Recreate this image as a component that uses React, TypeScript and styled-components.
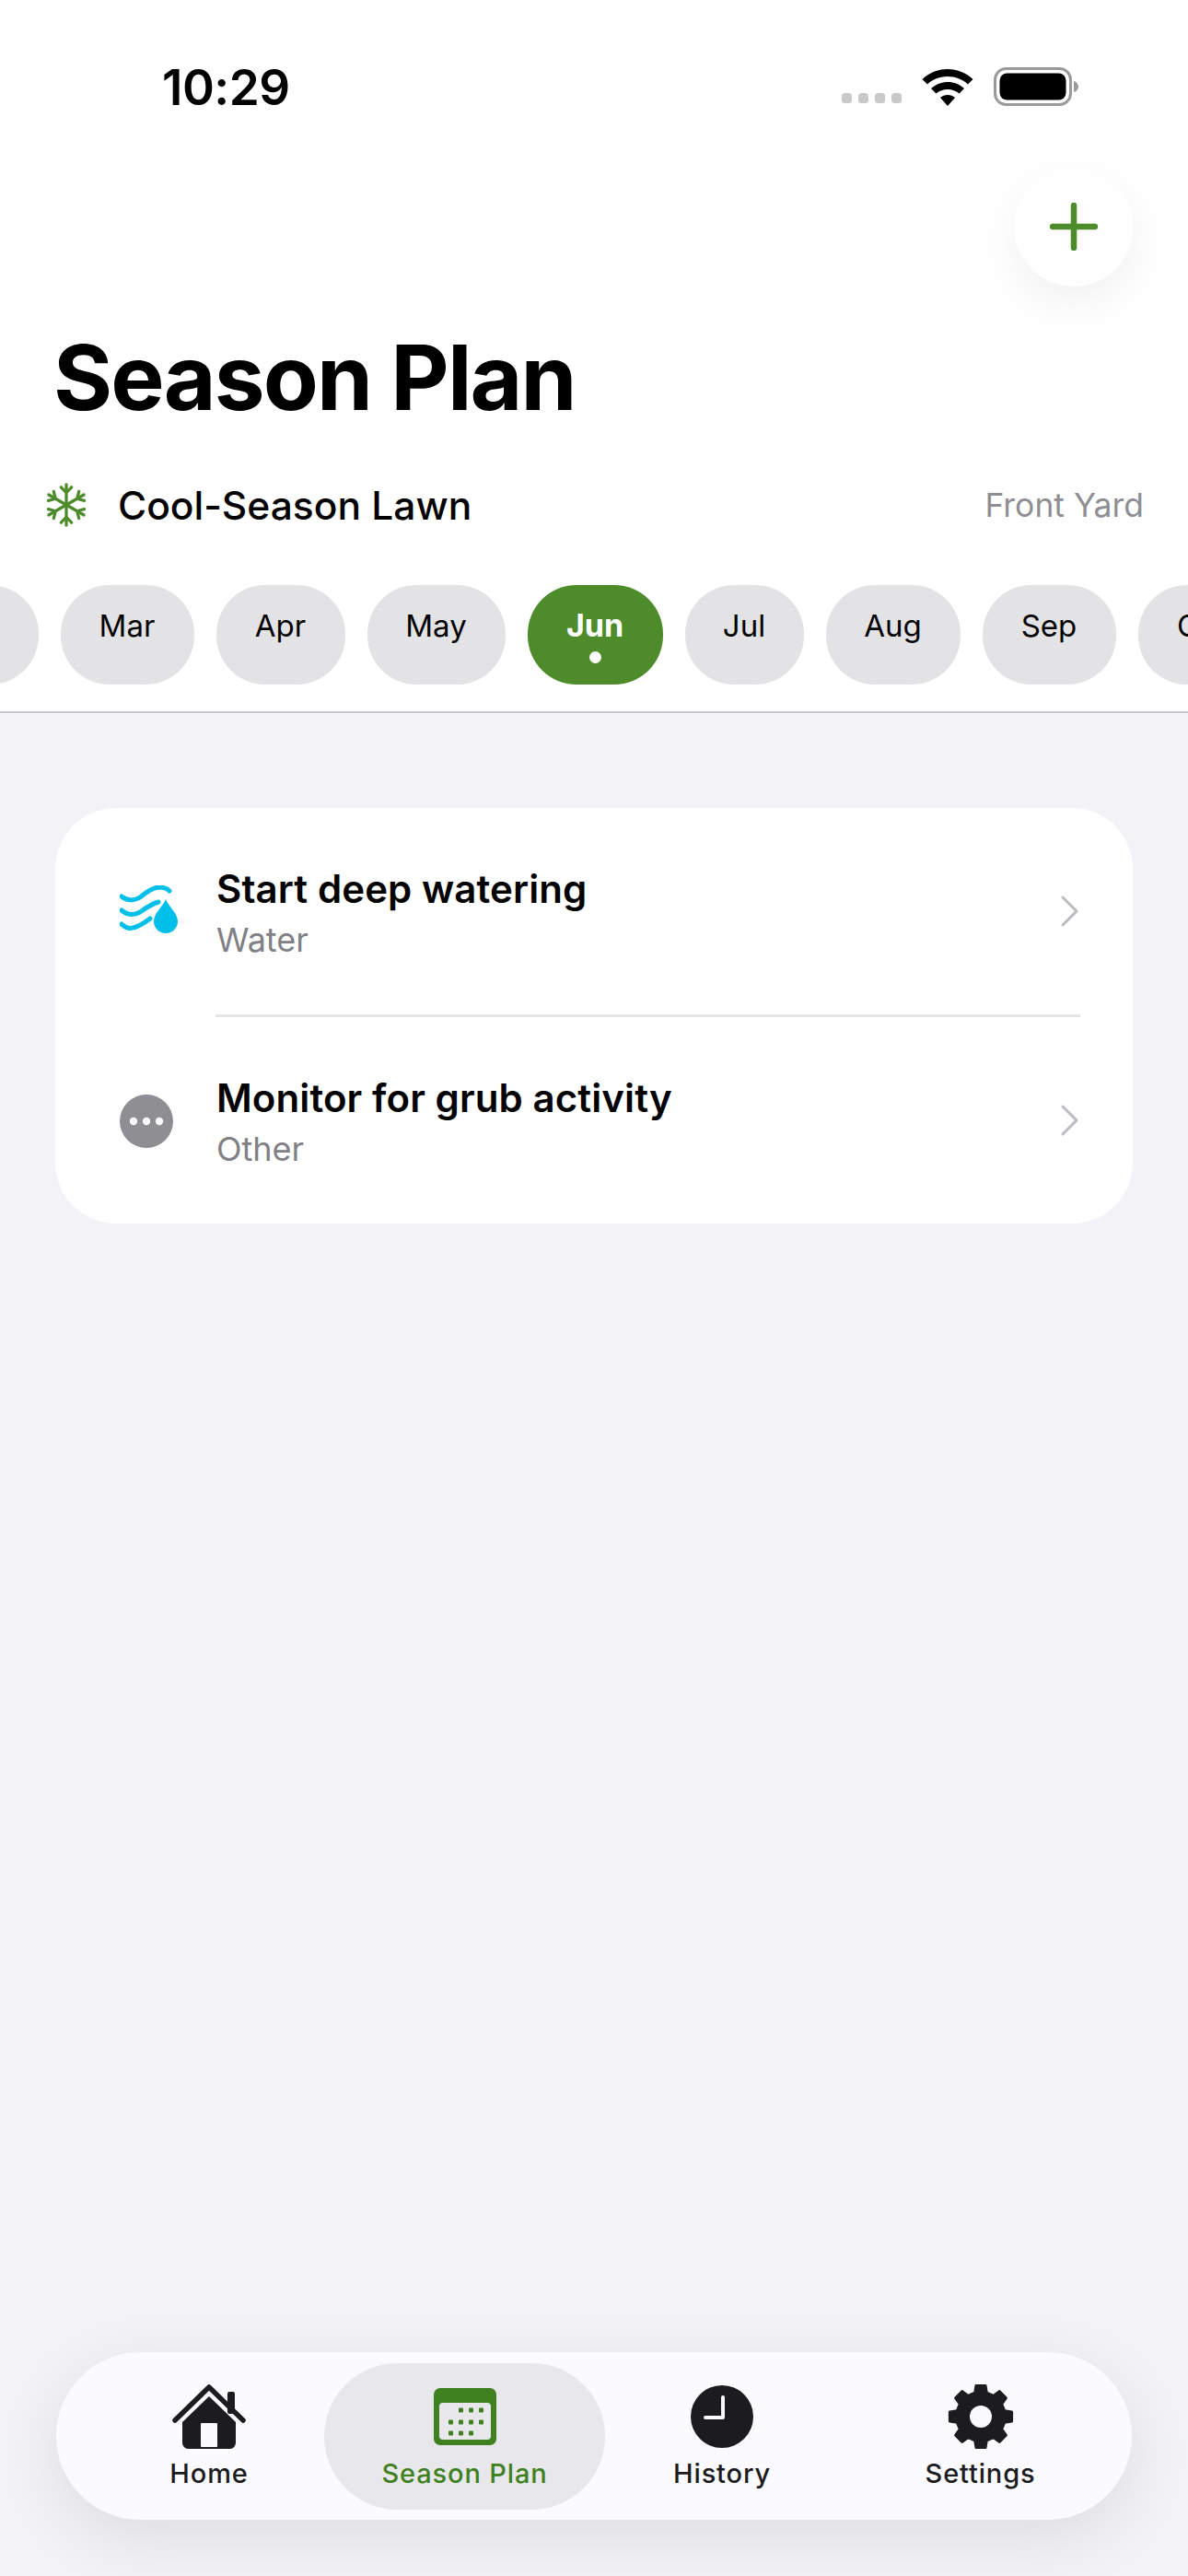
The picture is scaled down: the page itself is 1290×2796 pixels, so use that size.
import React from 'react';
import styled, { createGlobalStyle } from 'styled-components';

const Global = createGlobalStyle`
  html, body { margin: 0; padding: 0; background: #f2f2f7; }
  body { font-family: Inter, "Noto Sans", sans-serif; color: #000; }
  * { box-sizing: border-box; }
`;

const Page = styled.div`
  width: 1290px;
  height: 2796px;
  display: flex;
  flex-direction: column;
  overflow: hidden;
  background: #f2f2f7;
`;

const Header = styled.header`
  background: #fff;
  height: 774px;
  border-bottom: 2px solid #c9c9cc;
  display: flex;
  flex-direction: column;
`;

const StatusBar = styled.div`
  height: 181px;
  padding: 65px 119px 0 176px;
  display: flex;
  justify-content: space-between;
  align-items: flex-start;
`;

const Time = styled.div`
  font-size: 53px;
  line-height: 60px;
  font-weight: 600;
  letter-spacing: -0.5px;
`;

const StatusIcons = styled.div`
  display: flex;
  align-items: flex-end;
  gap: 22px;
  padding-top: 8px;
`;

const SignalDots = styled.div`
  display: flex;
  gap: 7px;
  padding-bottom: 3px;
`;

const SignalDot = styled.span`
  width: 11px;
  height: 11px;
  border-radius: 3.5px;
  background: #c9c9c9;
`;

const AddRow = styled.div`
  display: flex;
  justify-content: flex-end;
  padding-right: 59px;
  height: 130px;
`;

const AddButton = styled.button`
  width: 130px;
  height: 130px;
  border-radius: 50%;
  border: 0;
  padding: 0;
  background: #fefefe;
  box-shadow: 0 18px 50px rgba(0, 0, 0, 0.06);
  display: flex;
  align-items: center;
  justify-content: center;
`;

const Title = styled.h1`
  margin: 41px 0 0;
  padding-left: 58px;
  font-size: 98px;
  line-height: 116px;
  font-weight: 700;
  letter-spacing: -1.9px;
`;

const LawnRow = styled.div`
  margin-top: 50px;
  height: 60px;
  padding: 0 48px 0 49px;
  display: flex;
  align-items: center;
`;

const LawnName = styled.div`
  font-size: 42.5px;
  font-weight: 500;
  margin-left: 33px;
  flex: 1;
`;

const YardName = styled.div`
  font-size: 35.5px;
  color: #8e8e93;
`;

const MonthStrip = styled.div`
  margin-top: 57px;
  margin-left: -102px;
  display: flex;
  gap: 24px;
  width: 1500px;
`;

const Month = styled.div<{ $width: number; $active?: boolean }>`
  width: ${p => p.$width}px;
  height: 108px;
  flex: none;
  border-radius: 53px;
  background: ${p => (p.$active ? '#4e8c2b' : '#e3e3e6')};
  color: ${p => (p.$active ? '#fff' : '#000')};
  font-size: ${p => (p.$active ? 34 : 33)}px;
  font-weight: ${p => (p.$active ? 700 : 400)};
  display: flex;
  flex-direction: column;
  align-items: center;
  padding: 24px 1px 0 0;
  line-height: 40px;
`;

const MonthDot = styled.span`
  width: 13px;
  height: 13px;
  border-radius: 50%;
  background: #fff;
  margin-top: 8px;
`;

const Main = styled.main`
  flex: 1;
  padding: 103px 60px 0;
`;

const Card = styled.section`
  height: 451px;
  background: #fff;
  border-radius: 66px;
  display: flex;
  flex-direction: column;
`;

const Row = styled.div`
  height: 225px;
  display: flex;
  align-items: flex-start;
  padding: 0 57px 0 70px;
`;

const IconSlot = styled.div`
  width: 105px;
  flex: none;
  height: 100%;
  padding-top: 84px;
`;

const RowText = styled.div`
  flex: 1;
  padding-top: 62px;
  display: flex;
  flex-direction: column;
`;

const RowTitle = styled.div`
  font-size: 42px;
  line-height: 52px;
  font-weight: 600;
  letter-spacing: 0.1px;
`;

const RowSub = styled.div`
  margin-top: 7px;
  font-size: 36px;
  line-height: 44px;
  color: #808085;
`;

const ChevronSlot = styled.div`
  padding-top: 94px;
  flex: none;
`;

const Separator = styled.div`
  height: 3px;
  margin: 0 57px 0 174px;
  background: #e5e5e8;
`;

const BottomNav = styled.nav`
  margin: 0 61px 61px 61px;
  height: 182px;
  border-radius: 91px;
  background: #fafaff;
  box-shadow: 0 20px 70px rgba(0, 0, 0, 0.09);
  padding: 12px 11px 11px 41px;
  display: grid;
  grid-template-columns: 250px 305px 254px 1fr;
`;

const Tab = styled.div<{ $active?: boolean }>`
  display: flex;
  flex-direction: column;
  align-items: center;
  border-radius: 80px;
  padding-top: 23px;
  color: ${p => (p.$active ? '#3f8020' : '#1c1c1e')};
  background: ${p => (p.$active ? '#e8e8ec' : 'transparent')};
`;

const TabIcon = styled.div`
  height: 70px;
  display: flex;
  align-items: center;
  justify-content: center;
`;

const TabLabel = styled.div`
  margin-top: 9px;
  font-size: 29px;
  line-height: 36px;
  font-weight: 500;
  letter-spacing: 0.85px;
`;

const gearPath = () => {
  const cx = 36, cy = 36, ro = 34, ri = 26.5, teeth = 8;
  const pts: string[] = [];
  for (let i = 0; i < teeth; i++) {
    const a = (i * 2 * Math.PI) / teeth - Math.PI / 2;
    const w1 = 0.24, w2 = 0.15;
    const p = (r: number, t: number) =>
      `${(cx + r * Math.cos(t)).toFixed(2)} ${(cy + r * Math.sin(t)).toFixed(2)}`;
    pts.push(`${i === 0 ? 'M' : 'L'}${p(ri, a - w1)}`, `L${p(ro, a - w2)}`, `L${p(ro, a + w2)}`, `L${p(ri, a + w1)}`);
  }
  return pts.join(' ') + 'Z';
};

const Chevron = () => (
  <svg width="22" height="36" viewBox="0 0 22 36" fill="none">
    <path d="M3 3l15 15L3 33" stroke="#bcbcc0" strokeWidth="3" strokeLinecap="round" strokeLinejoin="round" />
  </svg>
);

const WaterIcon = () => (
  <svg width="66" height="60" viewBox="0 0 66 60" fill="none">
    <g stroke="#00bfe8" strokeWidth="5" strokeLinecap="round">
      <path d="M2 12c6 5 14 5 20 1 6-5 14-11 21-11 4 0 8 1 11 4" />
      <path d="M2 27c6 5 13 6 20 2 7-5 13-9 20-11" />
      <path d="M2 42c5 5 11 6 18 2 5-2 9-5 13-8" />
    </g>
    <path d="M50 15c3 8 13 15 13 24a13 13 0 0 1-26 0c0-9 10-16 13-24z" fill="#00bfe8" />
  </svg>
);

const MoreIcon = () => (
  <svg width="58" height="58" viewBox="0 0 58 58">
    <circle cx="29" cy="29" r="29" fill="#8e8e93" />
    <circle cx="15" cy="29" r="4.200" fill="#fff" />
    <circle cx="29" cy="29" r="4.200" fill="#fff" />
    <circle cx="43" cy="29" r="4.200" fill="#fff" />
  </svg>
);

const Snowflake = () => (
  <svg width="46" height="48" viewBox="0 0 48 50" fill="none" stroke="#4e8c2b" strokeWidth="3.400" strokeLinecap="round" strokeLinejoin="round">
    {[0, 60, 120].map(r => (
      <g key={r} transform={`rotate(${r} 24 25)`}>
        <path d="M24 2v46" />
        <path d="M18 5l6 6 6-6" />
        <path d="M18 45l6-6 6 6" />
      </g>
    ))}
  </svg>
);

const Wifi = () => (
  <svg width="56" height="40" viewBox="0 0 56 40">
    <path d="M28 0c10.500 0 20 4 27.500 11l-5.500 5.500C44 11 36.500 8 28 8S12 11 6 16.500L.5 11C8 4 17.500 0 28 0z" />
    <path d="M28 14c6.800 0 13 2.600 18 7l-5.500 5.500C37 23.500 32.700 22 28 22s-9 1.500-12.500 4.500L10 21c5-4.400 11.200-7 18-7z" />
    <path d="M28 28c3 0 5.800 1.100 8 3L28 40l-8-9c2.200-1.900 5-3 8-3z" />
  </svg>
);

const Battery = () => (
  <svg width="92" height="42" viewBox="0 0 92 42">
    <rect x="1.500" y="1.500" width="82" height="39" rx="12" fill="none" stroke="#9a9a9a" strokeWidth="3" />
    <rect x="6.500" y="6.500" width="72" height="29" rx="8" fill="#000" />
    <path d="M87 15c3 .8 5 3 5 6s-2 5.200-5 6z" fill="#9a9a9a" />
  </svg>
);

const Plus = () => (
  <svg width="52" height="52" viewBox="0 0 52 52">
    <path d="M26 3v46M3 26h46" stroke="#4e8c2b" strokeWidth="6.500" strokeLinecap="round" />
  </svg>
);

const HomeIcon = () => (
  <svg width="82" height="70" viewBox="0 0 82 70" fill="#1c1c1e">
    <rect x="61" y="8" width="8" height="24" rx="2" />
    <path d="M4 39L41 3l37 36" fill="none" stroke="#1c1c1e" strokeWidth="5.500" strokeLinecap="round" strokeLinejoin="round" />
    <path d="M41 13l29 28v22c0 4-3 7-6 7H18c-3 0-6-3-6-7V41z" />
    <rect x="32" y="42" width="18" height="26" rx="1" fill="#fafaff" />
  </svg>
);

const CalendarIcon = () => {
  const dots: [number, number][] = [
    [28, 24], [39, 24], [50, 24],
    [17, 37], [28, 37], [39, 37], [50, 37],
    [17, 49], [28, 49], [39, 49],
  ];
  return (
    <svg width="68" height="62" viewBox="0 0 68 62">
      <rect width="68" height="62" rx="7" fill="#3f8020" />
      <rect x="6" y="16" width="56" height="40" rx="4" fill="#e8e8ec" />
      {dots.map(([x, y]) => (
        <rect key={`${x}-${y}`} x={x - 1} y={y - 2.5} width="5" height="5" rx="1" fill="#3f8020" />
      ))}
    </svg>
  );
};

const ClockIcon = () => (
  <svg width="68" height="68" viewBox="0 0 68 68">
    <circle cx="34" cy="34" r="34" fill="#1c1c1e" />
    <path d="M35 13v22H16" fill="none" stroke="#fafaff" strokeWidth="4" strokeLinecap="round" strokeLinejoin="round" />
  </svg>
);

const GearIcon = () => (
  <svg width="72" height="72" viewBox="0 0 72 72">
    <path d={gearPath()} fill="#1c1c1e" stroke="#1c1c1e" strokeWidth="3" strokeLinejoin="round" />
    <circle cx="36" cy="36" r="12" fill="#fafaff" />
  </svg>
);

const months: { name: string; width: number; active?: boolean }[] = [
  { name: 'Feb', width: 144 },
  { name: 'Mar', width: 145 },
  { name: 'Apr', width: 140 },
  { name: 'May', width: 150 },
  { name: 'Jun', width: 147, active: true },
  { name: 'Jul', width: 129 },
  { name: 'Aug', width: 146 },
  { name: 'Sep', width: 145 },
  { name: 'Oct', width: 140 },
];

export default function App() {
  return (
    <Page>
      <Global />
      <Header>
        <StatusBar>
          <Time>10:29</Time>
          <StatusIcons>
            <SignalDots>
              <SignalDot /><SignalDot /><SignalDot /><SignalDot />
            </SignalDots>
            <Wifi />
            <Battery />
          </StatusIcons>
        </StatusBar>
        <AddRow>
          <AddButton aria-label="Add"><Plus /></AddButton>
        </AddRow>
        <Title>Season Plan</Title>
        <LawnRow>
          <Snowflake />
          <LawnName>Cool-Season Lawn</LawnName>
          <YardName>Front Yard</YardName>
        </LawnRow>
        <MonthStrip>
          {months.map(m => (
            <Month key={m.name} $width={m.width} $active={m.active}>
              {m.name}
              {m.active && <MonthDot />}
            </Month>
          ))}
        </MonthStrip>
      </Header>
      <Main>
        <Card>
          <Row>
            <IconSlot><WaterIcon /></IconSlot>
            <RowText>
              <RowTitle>Start deep watering</RowTitle>
              <RowSub>Water</RowSub>
            </RowText>
            <ChevronSlot><Chevron /></ChevronSlot>
          </Row>
          <Separator />
          <Row>
            <IconSlot><MoreIcon /></IconSlot>
            <RowText>
              <RowTitle>Monitor for grub activity</RowTitle>
              <RowSub>Other</RowSub>
            </RowText>
            <ChevronSlot><Chevron /></ChevronSlot>
          </Row>
        </Card>
      </Main>
      <BottomNav>
        <Tab><TabIcon><HomeIcon /></TabIcon><TabLabel>Home</TabLabel></Tab>
        <Tab $active><TabIcon><CalendarIcon /></TabIcon><TabLabel>Season Plan</TabLabel></Tab>
        <Tab><TabIcon><ClockIcon /></TabIcon><TabLabel>History</TabLabel></Tab>
        <Tab><TabIcon><GearIcon /></TabIcon><TabLabel>Settings</TabLabel></Tab>
      </BottomNav>
    </Page>
  );
}
